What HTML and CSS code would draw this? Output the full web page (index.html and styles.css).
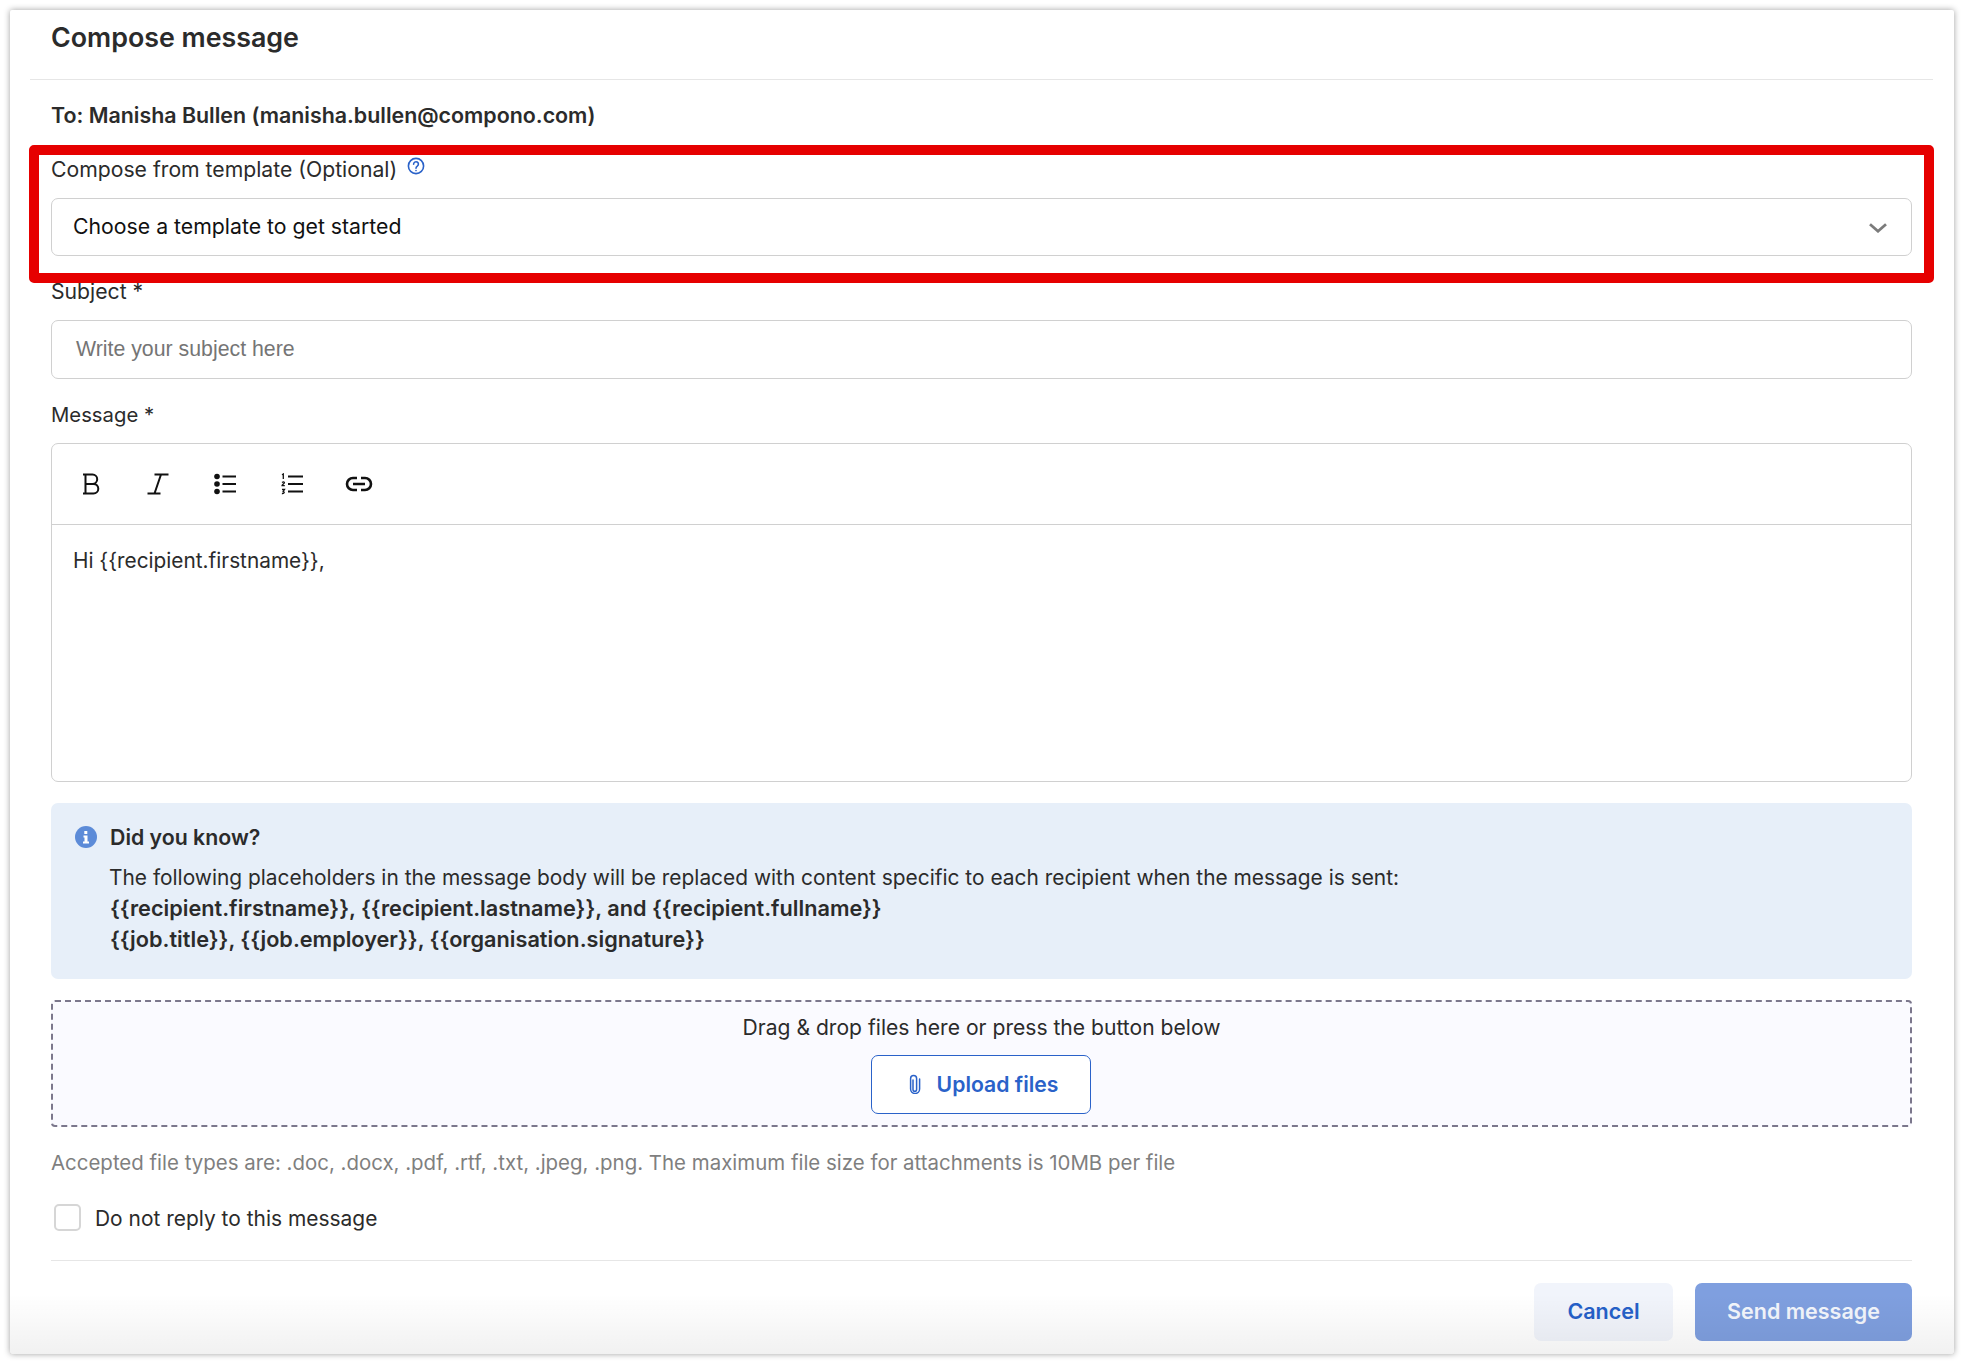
FILE: index.html
```html
<!DOCTYPE html>
<html lang="en">
<head>
<meta charset="utf-8">
<title>Compose message</title>
<link rel="stylesheet" href="styles.css">
</head>
<body>
<main class="card">
  <header class="card-head"><h1 class="title">Compose message</h1></header>
  <form class="form">
    <p class="to">To: Manisha Bullen (manisha.bullen@compono.com)</p>

    <div class="label-row label-template">
      <label class="label label-wide">Compose from template (Optional)</label>
      <svg class="help" viewBox="0 0 18 18" width="18" height="18" fill="none" stroke="#2a62c9" stroke-width="1.6" stroke-linecap="round"><circle cx="9" cy="9" r="7.6"/><path d="M6.6 7.2a2.4 2.4 0 1 1 3.7 2c-.9.6-1.3 1-1.3 2"/><path d="M9 13.5v.1"/></svg>
    </div>
    <div class="select">
      <span class="select-text">Choose a template to get started</span>
      <svg class="chevron" viewBox="0 0 18 10" width="18" height="10" fill="none" stroke="#7b7b7b" stroke-width="2.8"><path d="M1 1.2l8 7 8-7"/></svg>
    </div>

    <label class="label label-wide label-subject">Subject *</label>
    <div class="input"><span class="placeholder">Write your subject here</span></div>

    <label class="label label-message">Message *</label>
    <div class="editor">
      <div class="toolbar">
        <svg class="tool" viewBox="0 0 22 22" width="22" height="22" fill="none" stroke="#111" stroke-width="2"><path d="M3 1.500h9.500a4.700 4.700 0 0 1 0 9.400H5.500M5.500 1.500v19M5.500 10.900h8a4.800 4.800 0 0 1 0 9.600H3"/></svg>
        <svg class="tool" viewBox="0 0 22 22" width="22" height="22" fill="none" stroke="#111" stroke-width="2"><path d="M7.500 1.500h14M14 1.500L7.500 20.500M.5 20.500h13"/></svg>
        <svg class="tool" viewBox="0 0 22 22" width="22" height="22" fill="none" stroke="#111"><circle cx="3" cy="3.500" r="2.800" fill="#111" stroke="none"/><circle cx="3" cy="11" r="2.800" fill="#111" stroke="none"/><circle cx="3" cy="18.500" r="2.800" fill="#111" stroke="none"/><path stroke-width="2" d="M8.500 3.500H22M8.500 11H22M8.500 18.500H22"/></svg>
        <svg class="tool" viewBox="0 0 22 22" width="22" height="22" fill="none" stroke="#111"><path stroke-width="1.300" d="M1 1.800l1.300-.8v5M1 9.500q1.800-1.200 2.400 0c.3 1-2.400 2-2.400 3.200h2.800M1 16.500h2.500l-1.300 2c1.500 0 1.500 2.500-1.300 2"/><path stroke-width="2.200" d="M7 3.500h15M7 11h15M7 18.500h15"/></svg>
        <svg class="tool tool-link" viewBox="0 0 28 16" width="28" height="16" fill="none" stroke="#111" stroke-width="2.600"><path d="M12 2H8a6 6 0 0 0 0 12h4M16 2h4a6 6 0 0 1 0 12h-4M8 8h12"/></svg>
      </div>
      <div class="editor-body">Hi {{recipient.firstname}},</div>
    </div>

    <section class="info">
      <svg class="info-icon" viewBox="0 0 22 22" width="22" height="22"><circle cx="11" cy="11" r="11" fill="#5c8bd8"/><path fill="#fff" d="M9.300 5h3v3h-3zM8.500 9.500h4v6h1.500v2H8v-2h1.500v-4h-1z"/></svg>
      <div class="info-text">
        <h2 class="info-title">Did you know?</h2>
        <p class="info-line info-first">The following placeholders in the message body will be replaced with content specific to each recipient when the message is sent:</p>
        <p class="info-line info-strong">{{recipient.firstname}}, {{recipient.lastname}}, and {{recipient.fullname}}</p>
        <p class="info-line info-strong">{{job.title}}, {{job.employer}}, {{organisation.signature}}</p>
      </div>
    </section>

    <section class="drop">
      <p class="drop-text">Drag &amp; drop files here or press the button below</p>
      <button type="button" class="upload">
        <svg class="clip" viewBox="0 0 14 20" width="14" height="20" fill="none" stroke="#2a62c9" stroke-width="1.500" stroke-linecap="round"><path d="M5 6v9.500a1.800 1.800 0 0 0 3.600 0V4.500a3 3 0 0 0-6 0V15a4.500 4.500 0 0 0 9 0V5"/></svg>
        <span>Upload files</span>
      </button>
    </section>

    <p class="hint">Accepted file types are: .doc, .docx, .pdf, .rtf, .txt, .jpeg, .png. The maximum file size for attachments is 10MB per file</p>

    <div class="check-row">
      <span class="checkbox"></span>
      <span class="check-label">Do not reply to this message</span>
    </div>

    <footer class="actions">
      <button type="button" class="btn btn-cancel">Cancel</button>
      <button type="button" class="btn btn-send">Send message</button>
    </footer>
  </form>
  <div class="fade"></div>
  <div class="highlight"></div>
</main>
</body>
</html>
```

FILE: styles.css
```css
* { box-sizing: border-box; }
html, body { margin: 0; padding: 0; background: #fff; }
body {
  padding: 10px;
  font-family: "Inter", "Liberation Sans", sans-serif;
  font-size: 20.8px;
  line-height: 30px;
  color: #2b2b2b;
}
p, h1, h2 { margin: 0; }
.card {
  position: relative;
  width: 1944px;
  height: 1344px;
  background: #fff;
  border-radius: 2px;
  box-shadow: 0 0 6px rgba(0,0,0,.38);
}
.card-head { margin: 0 21px 0 20px; height: 70px; border-bottom: 1px solid #e6e6e6; padding: 11px 0 0 21px; }
.title { font-size: 26.800px; line-height: 32px; font-weight: 600; color: #2b2b2b; }
.form { padding: 0 42px 0 41px; }
.to { margin-top: 20px; font-weight: 600; font-size: 21.400px; }
.label-row { display: flex; align-items: flex-start; gap: 10px; }
.label { display: block; }
.label-wide { font-size: 21.200px; }
.label-template { margin-top: 24px; }
.help { margin-top: 3px; }
.select {
  margin-top: 14px; height: 58px; display: flex; align-items: center; justify-content: space-between;
  padding: 0 24px 0 21px; border: 1px solid #d0d0d0; border-radius: 7px; color: #111;
}
.select-text { font-size: 21.250px; margin-top: -3px; }
.chevron { margin-top: 2px; }
.label-subject { margin-top: 20px; }
.input {
  margin-top: 14px; height: 59px; display: flex; align-items: center; padding-left: 24px;
  border: 1px solid #d0d0d0; border-radius: 7px; color: #757575;
}
.placeholder { font-family: "Liberation Sans", Arial, sans-serif; font-size: 21.300px; margin-top: -2px; }
.label-message { margin-top: 21px; font-size: 20.300px; }
.editor { margin-top: 13px; height: 339px; border: 1px solid #d0d0d0; border-radius: 7px; }
.toolbar { height: 81px; display: flex; align-items: center; gap: 45px; padding-left: 28px; border-bottom: 1px solid #d0d0d0; }
.tool-link { margin-left: -3px; }
.editor-body { padding: 21px 0 0 21px; }
.info {
  margin-top: 21px; height: 176px; display: flex; gap: 13px; padding: 19px 0 0 24px;
  background: #e7eff9; border-radius: 7px;
}
.info-icon { margin-top: 4px; flex: none; }
.info-title { font-size: 21.300px; font-weight: 600; line-height: 30px; }
.info-line { line-height: 31px; font-size: 20.900px; }
.info-first { margin-top: 10px; margin-left: -1px; }
.info-strong { font-weight: 600; font-size: 21.700px; }
.drop {
  margin-top: 21px; height: 127px; display: flex; flex-direction: column; align-items: center;
  padding-top: 11px; background: #fafaff; border: 2px dashed #7b778c; border-radius: 4px;
}
.drop-text { font-size: 21.100px; }
.upload {
  margin: 12px 2px 0 0; width: 220px; height: 59px; display: flex; align-items: center; justify-content: center; gap: 15px;
  padding: 0 0 2px 5px;
  background: #fff; border: 1px solid #2a62c9; border-radius: 7px; color: #2a62c9;
  font: 600 21.200px/30px "Inter", "Liberation Sans", sans-serif;
}
.hint { margin-top: 21px; color: #7f7f7f; font-size: 20.450px; }
.check-row { margin-top: 26px; height: 27px; display: flex; align-items: center; gap: 14px; padding-left: 3px; }
.check-label { margin-top: 2px; font-size: 20.950px; }
.checkbox { width: 27px; height: 27px; border: 2px solid #d6d6d6; border-radius: 5px; background: #fff; }
.actions {
  margin-top: 29px; padding-top: 22px; display: flex; justify-content: flex-end; gap: 22px;
  border-top: 1px solid #e6e6e6;
}
.btn { height: 58px; border: 0; border-radius: 7px; padding: 0 0 3px; font: 600 21.500px/30px "Inter", "Liberation Sans", sans-serif; }
.btn-cancel { width: 139px; background: #f1f4fb; color: #2560c8; }
.btn-send { width: 217px; background: #7f9fdf; color: #f3f6fc; }
.fade {
  position: absolute; left: 0; right: 0; bottom: 0; height: 60px; pointer-events: none;
  background: linear-gradient(rgba(0,0,0,0), rgba(0,0,0,.055));
}
.highlight {
  position: absolute; left: 19px; top: 135px; width: 1905px; height: 138px;
  border: 10px solid #e60000; border-radius: 5px; pointer-events: none;
}
```
